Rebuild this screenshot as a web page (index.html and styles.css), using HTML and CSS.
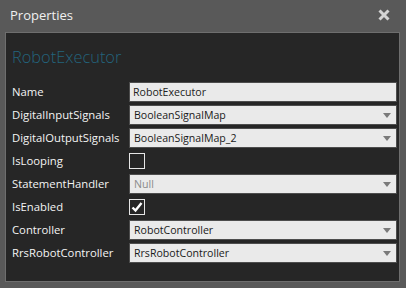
FILE: index.html
```html
<!DOCTYPE html>
<html lang="en">
<head>
    <meta charset="UTF-8">
    <meta name="viewport" content="width=device-width, initial-scale=1.0">
    <title>Properties</title>
    <link rel="stylesheet" href="styles.css">
</head>
<body>
<div class="window">
    <div class="title-bar">
        <span class="title">Properties</span>
        <svg class="close" width="12" height="12" viewBox="0 0 12 12">
            <path d="M1.5 1.5 L10.5 10.5 M10.5 1.5 L1.5 10.5" stroke="#d4d4d4" stroke-width="3"/>
        </svg>
    </div>
    <div class="panel">
        <h2 class="heading">RobotExecutor</h2>
        <div class="props">
            <div class="label">Name</div>
            <div class="field text">RobotExecutor</div>

            <div class="label">DigitalInputSignals</div>
            <div class="field combo">BooleanSignalMap<span class="arrow"></span></div>

            <div class="label">DigitalOutputSignals</div>
            <div class="field combo">BooleanSignalMap_2<span class="arrow"></span></div>

            <div class="label">IsLooping</div>
            <div class="check-cell"><span class="check"></span></div>

            <div class="label">StatementHandler</div>
            <div class="field combo disabled">Null<span class="arrow"></span></div>

            <div class="label">IsEnabled</div>
            <div class="check-cell">
                <span class="check">
                    <svg width="14" height="14" viewBox="0 0 14 14">
                        <path d="M2.5 7.5 L5.5 10.5 L11.5 3" fill="none" stroke="#ffffff" stroke-width="2.4"/>
                    </svg>
                </span>
            </div>

            <div class="label">Controller</div>
            <div class="field combo">RobotController<span class="arrow"></span></div>

            <div class="label">RrsRobotController</div>
            <div class="field combo">RrsRobotController<span class="arrow"></span></div>
        </div>
    </div>
</div>
</body>
</html>
```

FILE: styles.css
```css
html, body {
    margin: 0;
    padding: 0;
}

body {
    background-color: #595959;
    font-family: "Open Sans", "Noto Sans", sans-serif;
    width: 406px;
    height: 288px;
    overflow: hidden;
}

.window {
    display: flex;
    flex-direction: column;
    height: 288px;
}

.title-bar {
    height: 32px;
    display: flex;
    align-items: center;
    justify-content: space-between;
    padding: 0 16px 0 10px;
}

.title {
    color: #f0f0f0;
    font-size: 13px;
    margin-top: -2px;
}

.close {
    margin-top: -2px;
}

.panel {
    margin: 0 6px 6px 5px;
    height: 250px;
    box-sizing: border-box;
    border: 1px solid #6e6e6e;
    background-color: #262626;
    padding: 0 2px 0 6px;
}

.heading {
    margin: 12px 0 0 0;
    height: 37px;
    line-height: 24px;
    font-size: 16.4px;
    font-weight: 300;
    color: #23647d;
}

.props {
    display: grid;
    grid-template-columns: 117px 268px;
    grid-auto-rows: 20px;
    row-gap: 3px;
}

.label {
    color: #f4f4f4;
    font-size: 11.3px;
    line-height: 20px;
    white-space: nowrap;
}

.field {
    position: relative;
    box-sizing: border-box;
    height: 20px;
    border: 1px solid #4d4d4d;
    background-color: #eaeaea;
    color: #1a1a1a;
    font-size: 10.6px;
    line-height: 18px;
    padding-left: 4px;
}

.field.text {
    padding-left: 3px;
    color: #222222;
}

.field.disabled {
    color: #8a8a8a;
}

.arrow {
    position: absolute;
    right: 5px;
    top: 7px;
    width: 0;
    height: 0;
    border-left: 4px solid transparent;
    border-right: 4px solid transparent;
    border-top: 5px solid #7a7a7a;
}

.check-cell {
    display: flex;
    align-items: center;
}

.check {
    box-sizing: border-box;
    width: 16px;
    height: 16px;
    border: 1px solid #e6e6e6;
    display: flex;
    align-items: center;
    justify-content: center;
}
```
